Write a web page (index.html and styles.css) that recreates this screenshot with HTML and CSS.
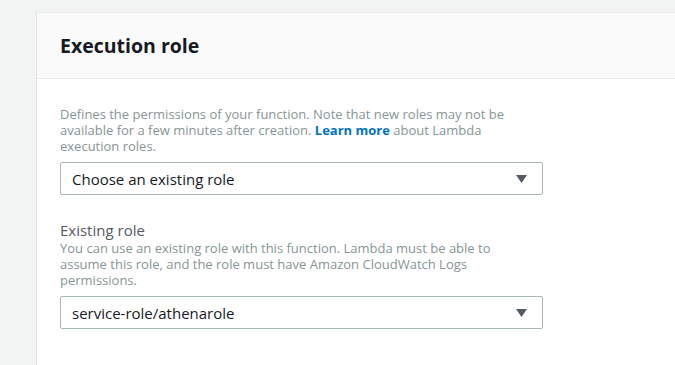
FILE: index.html
```html
<!DOCTYPE html>
<html>
<head>
<meta charset="utf-8">
<link rel="stylesheet" href="styles.css">
</head>
<body>
<div class="page">
  <section class="card">
    <header class="card-header">
      <h2 class="card-title">Execution role</h2>
    </header>
    <div class="card-body">
      <p class="desc">Defines the permissions of your function. Note that new roles may not be<br>available for a few minutes after creation. <a class="link" href="#">Learn more</a> about Lambda<br>execution roles.</p>
      <div class="select">
        <span class="select-value">Choose an existing role</span>
        <svg class="caret" width="11" height="8" viewBox="0 0 11 8"><path d="M0 0H11L5.5 8Z" fill="#545b64"/></svg>
      </div>
      <div class="field">
        <div class="label">Existing role</div>
        <p class="desc">You can use an existing role with this function. Lambda must be able to<br>assume this role, and the role must have Amazon CloudWatch Logs<br>permissions.</p>
        <div class="select">
          <span class="select-value">service-role/athenarole</span>
          <svg class="caret" width="11" height="8" viewBox="0 0 11 8"><path d="M0 0H11L5.5 8Z" fill="#545b64"/></svg>
        </div>
      </div>
    </div>
  </section>
</div>
</body>
</html>
```
FILE: styles.css
```css
html, body {
  margin: 0;
  padding: 0;
  background: #f2f3f3;
  height: 100%;
  overflow: hidden;
}
body {
  font-family: "Open Sans", "Noto Sans", sans-serif;
  color: #16191f;
}
.page {
  padding: 12px 0 0 36px;
}
.card {
  background: #ffffff;
  border-left: 1px solid #e1e4e4;
  border-top: 1px solid #e8eaea;
  min-height: 360px;
}
.card-header {
  background: #fafafa;
  border-bottom: 1px solid #eaeded;
  height: 65px;
  display: flex;
  align-items: center;
  padding-left: 23px;
}
.card-title {
  margin: 0;
  font-size: 19.5px;
  font-weight: 700;
  color: #16191f;
}
.card-body {
  padding: 27px 0 0 23px;
}
.desc {
  margin: 0;
  font-size: 13px;
  line-height: 16px;
  color: #879596;
}
.link {
  color: #0073bb;
  font-weight: 700;
  text-decoration: none;
}
.select {
  margin-top: 8px;
  height: 31px;
  border: 1px solid #aab7b8;
  border-radius: 2px;
  display: flex;
  align-items: center;
  justify-content: space-between;
  padding: 0 15px 0 11px;
  box-sizing: content-box;
  width: 455px;
}
.select-value {
  font-size: 15px;
  color: #16191f;
}
.field {
  margin-top: 25px;
}
.label {
  font-size: 15px;
  line-height: 20px;
  color: #545b64;
}
```
